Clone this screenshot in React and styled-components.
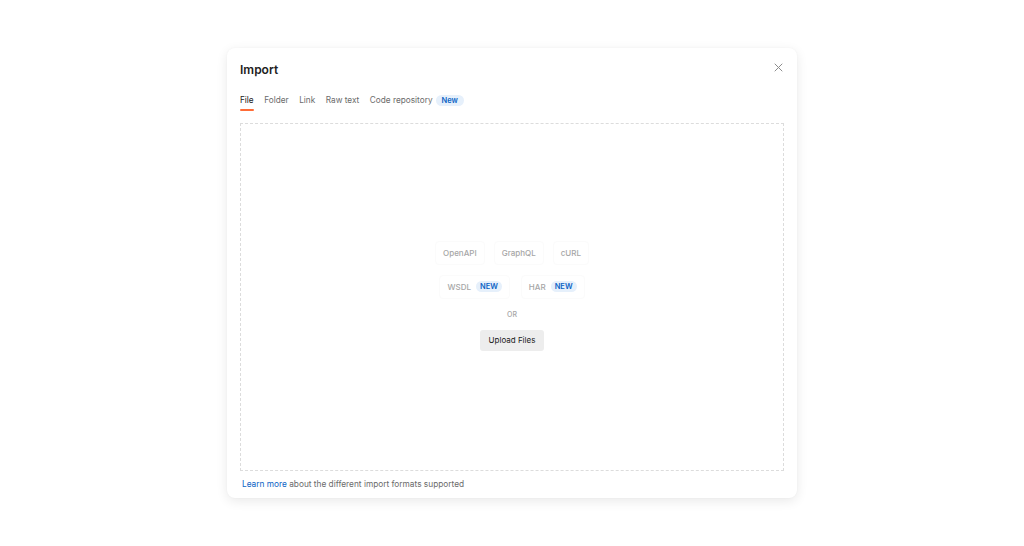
import React from "react";
import styled, { createGlobalStyle } from "styled-components";

const Global = createGlobalStyle`
  html, body { margin: 0; padding: 0; background: #ffffff; }
  body { font-family: Inter, "Noto Sans", sans-serif; -webkit-font-smoothing: antialiased; }
`;

const Page = styled.div`
  width: 1024px;
  height: 546px;
  display: flex;
  align-items: center;
  justify-content: center;
`;

const Modal = styled.div`
  width: 570px;
  height: 450px;
  box-sizing: border-box;
  background: #fff;
  border-radius: 8px;
  box-shadow: 0 3px 12px rgba(0, 0, 0, 0.09), 0 0 2px rgba(0, 0, 0, 0.04);
  padding: 11px 13px 9px 13px;
  display: flex;
  flex-direction: column;
`;

const Header = styled.div`
  display: flex;
  align-items: center;
  justify-content: space-between;
  height: 18px;
  margin-top: 1px;
`;

const Title = styled.h2`
  margin: 0;
  font-size: 12px;
  font-weight: 600;
  color: #212121;
`;

const Close = styled.button`
  border: none;
  background: none;
  padding: 0;
  width: 12px;
  height: 12px;
  display: flex;
  align-items: center;
  justify-content: center;
  margin-top: -4px;
  cursor: pointer;
`;

const Tabs = styled.div`
  display: flex;
  gap: 10.5px;
  margin-top: 15px;
  height: 18px;
`;

const Tab = styled.div`
  position: relative;
  font-size: 8.25px;
  color: ${(p) => (p.$active ? "#212121" : "#6b6b6b")};
  display: flex;
  align-items: center;
  gap: 3px;
  height: 14px;
  &::after {
    content: "";
    display: ${(p) => (p.$active ? "block" : "none")};
    position: absolute;
    left: 0;
    right: 0;
    bottom: -4px;
    height: 2px;
    border-radius: 1px;
    background: #ff6c37;
  }
`;

const Badge = styled.span`
  display: inline-flex;
  align-items: center;
  height: 11px;
  padding: 0 ${(p) => (p.$wide ? 6 : 4)}px;
  border-radius: 6px;
  background: #e6f0fb;
  color: #0b63c5;
  font-size: 7.5px;
  font-weight: 600;
`;

const Drop = styled.div`
  flex: 1;
  margin-top: 12px;
  border: 1px dashed #dcdcdc;
  display: flex;
  flex-direction: column;
  align-items: center;
  justify-content: center;
`;

const Row = styled.div`
  display: flex;
  gap: ${(p) => p.$gap || 4}px;
  margin-bottom: ${(p) => p.$mb || 0}px;
`;

const Format = styled.div`
  display: flex;
  align-items: center;
  gap: 5px;
  height: 22px;
  padding: 0 7px;
  border: 1px solid #fbfbfb;
  border-radius: 4px;
  font-size: 8px;
  font-weight: 500;
  color: #a6a6a6;
`;

const Or = styled.div`
  font-size: 7px;
  font-weight: 500;
  color: #a6a6a6;
  margin-top: 11px;
`;

const Upload = styled.button`
  margin-top: 11px;
  margin-bottom: 3px;
  height: 21px;
  padding: 0 9px;
  border: none;
  border-radius: 3px;
  background: #ededed;
  color: #212121;
  font-family: inherit;
  font-size: 8px;
  cursor: pointer;
`;

const Footer = styled.div`
  margin-top: 8px;
  padding-left: 2px;
  font-size: 8.3px;
  color: #6b6b6b;
`;

const Link = styled.a`
  color: #0b63c5;
  text-decoration: none;
`;

export default function App() {
  return (
    <>
      <Global />
      <Page>
        <Modal>
          <Header>
            <Title>Import</Title>
            <Close aria-label="Close">
              <svg width="9" height="9" viewBox="0 0 9 9">
                <path d="M1 1 L8 8 M8 1 L1 8" stroke="#8c8c8c" strokeWidth="1" strokeLinecap="round" />
              </svg>
            </Close>
          </Header>
          <Tabs>
            <Tab $active>File</Tab>
            <Tab>Folder</Tab>
            <Tab>Link</Tab>
            <Tab>Raw text</Tab>
            <Tab>
              Code repository <Badge $wide>New</Badge>
            </Tab>
          </Tabs>
          <Drop>
            <Row $gap={9} $mb={10}>
              <Format>OpenAPI</Format>
              <Format>GraphQL</Format>
              <Format>cURL</Format>
            </Row>
            <Row $gap={11}>
              <Format>
                WSDL <Badge>NEW</Badge>
              </Format>
              <Format>
                HAR <Badge>NEW</Badge>
              </Format>
            </Row>
            <Or>OR</Or>
            <Upload>Upload Files</Upload>
          </Drop>
          <Footer>
            <Link href="#">Learn more</Link> about the different import formats supported
          </Footer>
        </Modal>
      </Page>
    </>
  );
}
